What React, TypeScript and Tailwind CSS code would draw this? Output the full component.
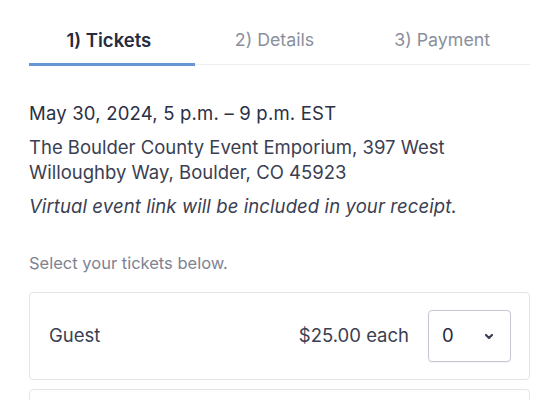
import React from "react";

export default function App() {
  const tabs = ["1) Tickets", "2) Details", "3) Payment"];
  return (
    <div className="w-[548px] h-[400px] overflow-hidden bg-white" style={{ fontFamily: "Inter, 'Noto Sans', sans-serif" }}>
      <div className="ml-[29px] w-[501px]">
        <div className="flex border-b border-[#eceef2] pt-[30px]">
          {tabs.map((t, i) => (
            <div
              key={t}
              className={
                "flex-1 text-center leading-[20px] pb-[13px] border-b-[3px] -mb-[2px] " +
                (i === 0
                  ? "text-[18.5px] pr-[6px] border-[#6596d1] font-semibold text-[#262b3d]"
                  : "text-[17.8px] pr-[8px] border-transparent text-[#8a8f9c]")
              }
            >
              {t}
            </div>
          ))}
        </div>
        <div className="mt-[36px] text-[18.5px] leading-[24px] tracking-[0.2px] text-[#2b3044]">May 30, 2024, 5 p.m. – 9 p.m. EST</div>
        <div className="mt-[10px] text-[18.5px] leading-[25px] text-[#3a4052]">
          The Boulder County Event Emporium, 397 West
          <br />
          Willoughby Way, Boulder, CO 45923
        </div>
        <div className="mt-[9px] text-[18.5px] leading-[24px] tracking-[0.1px] italic text-[#3a4052]">Virtual event link will be included in your receipt.</div>
        <div className="mt-[35px] text-[16.5px] leading-[20px] text-[#7d8392]">Select your tickets below.</div>
        <div className="mt-[19px] h-[88px] rounded-[4px] border border-[#e2e4ea] flex items-center pl-[19px] pr-[18px]">
          <div className="flex-1 text-[18.5px] text-[#3a4052]">Guest</div>
          <div className="text-[18.5px] text-[#3a4052] mr-[19px]">$25.00 each</div>
          <div className="w-[83px] h-[52px] rounded-[4px] border border-[#c5c8d0] flex items-center pl-[13px] pr-[16px] shadow-[0_1px_1px_rgba(0,0,0,0.05)]">
            <span className="flex-1 text-[18.5px] text-[#262b3d]">0</span>
            <svg width="10" height="7" viewBox="0 0 10 7" fill="none">
              <path d="M2 2L5 5L8 2" stroke="#3a4052" strokeWidth="2.2" strokeLinecap="round" strokeLinejoin="round" />
            </svg>
          </div>
        </div>
        <div className="mt-[9px] h-[88px] rounded-[4px] border border-[#e2e4ea]"></div>
      </div>
    </div>
  );
}
